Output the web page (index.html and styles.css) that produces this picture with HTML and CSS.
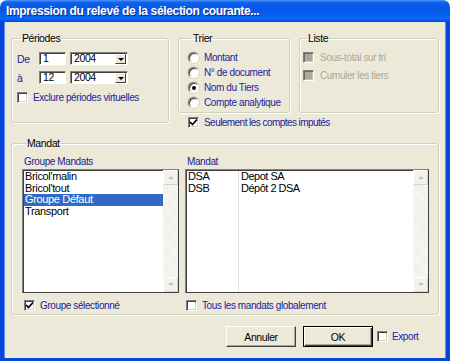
FILE: index.html
```html
<!DOCTYPE html>
<html lang="fr">
<head>
    <meta charset="UTF-8">
    <title>Impression du relevé de la sélection courante...</title>
    <link rel="stylesheet" href="styles.css">
</head>
<body>
    <div class="window">
        <div class="titlebar">Impression du relevé de la sélection courante...</div>
        <div class="dialog">
            <div class="top-grid">
                <fieldset class="group periodes">
                    <legend>Périodes</legend>
                    <div class="period-row">
                        <span class="lbl">De</span>
                        <span class="field num">1</span>
                        <span class="combo"><span class="combo-value">2004</span><span class="combo-btn"><span class="arrow"></span></span></span>
                    </div>
                    <div class="period-row">
                        <span class="lbl">à</span>
                        <span class="field num">12</span>
                        <span class="combo"><span class="combo-value">2004</span><span class="combo-btn"><span class="arrow"></span></span></span>
                    </div>
                    <div class="check exclure"><span class="box"></span>Exclure périodes virtuelles</div>
                </fieldset>

                <fieldset class="group trier">
                    <legend>Trier</legend>
                    <div class="radio-row"><span class="radio"></span>Montant</div>
                    <div class="radio-row"><span class="radio"></span>N° de document</div>
                    <div class="radio-row"><span class="radio on"></span>Nom du Tiers</div>
                    <div class="radio-row"><span class="radio"></span>Compte analytique</div>
                </fieldset>

                <fieldset class="group liste">
                    <legend>Liste</legend>
                    <div class="check disabled"><span class="box"></span>Sous-total sur tri</div>
                    <div class="check disabled"><span class="box"></span>Cumuler les tiers</div>
                </fieldset>

                <div class="check seulement">
                    <span class="box"><svg width="9" height="9" viewBox="0 0 9 9"><path d="M1 4 L3.5 6.5 L8 1.5" fill="none" stroke="#000" stroke-width="1.7"/></svg></span>Seulement les comptes imputés
                </div>
            </div>

            <fieldset class="group mandat">
                <legend>Mandat</legend>
                <div class="mandat-grid">
                    <div class="col-title">Groupe Mandats</div>
                    <div class="col-title">Mandat</div>

                    <div class="listbox">
                        <div class="list-items">
                            <div class="item">Bricol'malin</div>
                            <div class="item">Bricol'tout</div>
                            <div class="item selected">Groupe Défaut</div>
                            <div class="item">Transport</div>
                        </div>
                        <div class="scrollbar">
                            <span class="sb-btn"><span class="sb-up"></span></span>
                            <span class="sb-track"></span>
                            <span class="sb-btn"><span class="sb-down"></span></span>
                        </div>
                    </div>

                    <div class="listbox">
                        <div class="list-items columns">
                            <div class="code-col">
                                <div class="item">DSA</div>
                                <div class="item">DSB</div>
                            </div>
                            <div class="name-col">
                                <div class="item">Depot SA</div>
                                <div class="item">Dépôt 2 DSA</div>
                            </div>
                        </div>
                        <div class="scrollbar">
                            <span class="sb-btn"><span class="sb-up"></span></span>
                            <span class="sb-track"></span>
                            <span class="sb-btn"><span class="sb-down"></span></span>
                        </div>
                    </div>

                    <div class="check groupe-sel">
                        <span class="box"><svg width="9" height="9" viewBox="0 0 9 9"><path d="M1 4 L3.5 6.5 L8 1.5" fill="none" stroke="#000" stroke-width="1.7"/></svg></span>Groupe sélectionné
                    </div>
                    <div class="check tous"><span class="box"></span>Tous les mandats globalement</div>
                </div>
            </fieldset>

            <div class="button-row">
                <button class="btn">Annuler</button>
                <button class="btn default">OK</button>
                <div class="check export"><span class="box"></span>Export</div>
            </div>
        </div>
    </div>
</body>
</html>
```

FILE: styles.css
```css
* {
    box-sizing: border-box;
}
body {
    margin: 0;
    background: #fff;
    font-family: "Liberation Sans", Arial, sans-serif;
    font-size: 10px;
    letter-spacing: -0.4px;
    color: #000;
}
.window {
    width: 450px;
    height: 361px;
    display: flex;
    flex-direction: column;
}
.titlebar {
    height: 22px;
    flex: none;
    border-radius: 7px 7px 0 0;
    background: linear-gradient(to bottom, #4a95f8 0%, #0d5fec 12%, #0556ea 45%, #0c66f6 85%, #0659ee 94%, #0343d0 100%);
    color: #fff;
    font-weight: bold;
    font-size: 12px;
    letter-spacing: -0.35px;
    line-height: 23px;
    padding-left: 6px;
    text-shadow: 1px 1px 0 #0b2d8c;
}
.dialog {
    flex: 1;
    background: #ECE9D8;
    border-style: solid;
    border-color: #0846d8;
    border-width: 0 4px 3px 4px;
    box-shadow: inset 1px 0 0 #5a8cf0, inset -1px 0 0 #5a8cf0;
    padding: 10px 7px 0 7px;
}

/* group boxes */
.group {
    margin: 0;
    padding: 0;
    min-width: 0;
    border: 1px solid #D0D0BF;
    border-radius: 3px;
    box-shadow: inset 1px 1px 0 #fff, 1px 1px 0 #fff;
    white-space: nowrap;
}
.group legend {
    margin-left: 4px;
    padding: 0 1px;
    line-height: 13px;
    font-size: 10.5px;
}
.top-grid {
    display: grid;
    grid-template-columns: 158px 112px 140px;
    grid-template-rows: 81px 12px;
    column-gap: 9px;
    row-gap: 3px;
}
.periodes {
    grid-row: 1 / 3;
    height: 91px;
    padding: 7px 0 0 5px;
}
.trier {
    padding: 5px 0 0 9px;
}
.liste {
    padding: 6px 0 0 3px;
}
.seulement {
    grid-column: 2 / 4;
    padding-left: 10px;
    letter-spacing: -0.55px;
}

/* periodes */
.period-row {
    display: flex;
    align-items: center;
    height: 13px;
    margin-bottom: 6px;
}
.lbl {
    width: 22px;
    color: #21219a;
    font-size: 10.5px;
}
.field {
    width: 27px;
    height: 13px;
    background: #fff;
    border: 1px solid;
    border-color: #808080 #fff #fff #808080;
    box-shadow: inset 1px 1px 0 #404040;
    padding-left: 3px;
    line-height: 11px;
    font-size: 10.5px;
}
.combo {
    display: flex;
    width: 58px;
    height: 13px;
    margin-left: 4px;
    background: #fff;
    border: 1px solid;
    border-color: #808080 #fff #fff #808080;
    box-shadow: inset 1px 1px 0 #404040;
}
.combo-value {
    flex: 1;
    padding-left: 3px;
    line-height: 11px;
    font-size: 10.5px;
}
.combo-btn {
    width: 11px;
    height: 10px;
    margin: 1px 1px 0 0;
    background: #ECE9D8;
    border: 1px solid;
    border-color: #fff #404040 #404040 #fff;
    display: flex;
    align-items: center;
    justify-content: center;
}
.arrow {
    width: 0;
    height: 0;
    border-left: 3px solid transparent;
    border-right: 3px solid transparent;
    border-top: 3px solid #000;
}

/* checkboxes and radios */
.check {
    display: flex;
    align-items: center;
    gap: 5px;
    height: 12px;
    color: #21219a;
    white-space: nowrap;
}
.box {
    width: 11px;
    height: 11px;
    flex: none;
    background: #fff;
    border: 1px solid;
    border-color: #808080 #fff #fff #808080;
    box-shadow: inset 1px 1px 0 #404040, inset -1px -1px 0 #D4D0C8;
    display: flex;
    align-items: center;
    justify-content: center;
}
.exclure {
    margin-top: 7px;
}
.check.disabled {
    color: #ACA899;
    height: 13px;
    margin-bottom: 5px;
    gap: 6px;
}
.check.disabled .box {
    background: #ACA899;
    box-shadow: inset 1px 1px 0 #6f6d63, inset -1px -1px 0 #c9c6b8;
}
.radio-row {
    display: flex;
    align-items: center;
    gap: 5px;
    height: 15px;
    color: #21219a;
}
.radio {
    width: 11px;
    height: 11px;
    flex: none;
    border-radius: 50%;
    background: #fff;
    border: 1px solid;
    border-color: #808080 #fff #fff #808080;
    box-shadow: inset 1px 1px 0 #404040, 0 0 0 0.5px #b8b5a6;
    display: flex;
    align-items: center;
    justify-content: center;
}
.radio.on::after {
    content: "";
    width: 4px;
    height: 4px;
    border-radius: 50%;
    background: #000;
}

/* mandat */
.mandat {
    margin-top: 9px;
    padding: 6px 9px 3px 10px;
}
.mandat-grid {
    display: grid;
    grid-template-columns: 157px 1fr;
    column-gap: 6px;
}
.col-title {
    color: #21219a;
    line-height: 12px;
    height: 13px;
    padding-left: 2px;
}
.listbox {
    display: flex;
    height: 124px;
    background: #fff;
    border: 1px solid;
    border-color: #808080 #404040 #404040 #808080;
    box-shadow: inset 1px 1px 0 #404040;
}
.list-items {
    flex: 1;
    padding: 1px 0 0 1px;
}
.item {
    line-height: 11.5px;
    height: 11.5px;
    padding-left: 1px;
    white-space: nowrap;
    font-size: 11px;
    letter-spacing: -0.35px;
}
.item.selected {
    background: #316AC5;
    color: #fff;
}
.list-items.columns {
    display: flex;
}
.code-col {
    width: 52px;
    border-right: 1px solid #e4e2da;
}
.name-col {
    padding-left: 1px;
}
.name-col .item {
    letter-spacing: -0.5px;
}
.scrollbar {
    width: 15px;
    display: flex;
    flex-direction: column;
    background: #F6F5F0;
}
.sb-btn {
    height: 15px;
    flex: none;
    background: #F3F2EC;
    border: 1px solid;
    border-color: #fff #d6d4c8 #d6d4c8 #fff;
    display: flex;
    align-items: center;
    justify-content: center;
}
.sb-track {
    flex: 1;
    background: repeating-linear-gradient(45deg, #f8f7f3 0 1px, #efeee7 1px 2px);
}
.sb-up, .sb-down {
    width: 0;
    height: 0;
    border-left: 3px solid transparent;
    border-right: 3px solid transparent;
}
.sb-up {
    border-bottom: 3px solid #c8c5b8;
}
.sb-down {
    border-top: 3px solid #c8c5b8;
}
.groupe-sel, .tous {
    margin-top: 6px;
}
.groupe-sel {
    padding-left: 2px;
}
.tous {
    padding-left: 1px;
}

/* buttons */
.button-row {
    display: flex;
    align-items: center;
    margin-top: 11px;
    padding-left: 215px;
}
.btn {
    width: 70px;
    height: 21px;
    padding: 0;
    margin-right: 7px;
    font-family: inherit;
    font-size: 10.5px;
    letter-spacing: -0.4px;
    color: #000;
    background: #ECE9D8;
    border: 1px solid;
    border-color: #fff #404040 #404040 #fff;
    box-shadow: inset -1px -1px 0 #ACA899;
}
.btn.default {
    border-color: #000;
    box-shadow: inset 1px 1px 0 #fff, inset -1px -1px 0 #404040, inset -2px -2px 0 #ACA899;
    margin-right: 4px;
}
.export {
    gap: 4px;
}
```
